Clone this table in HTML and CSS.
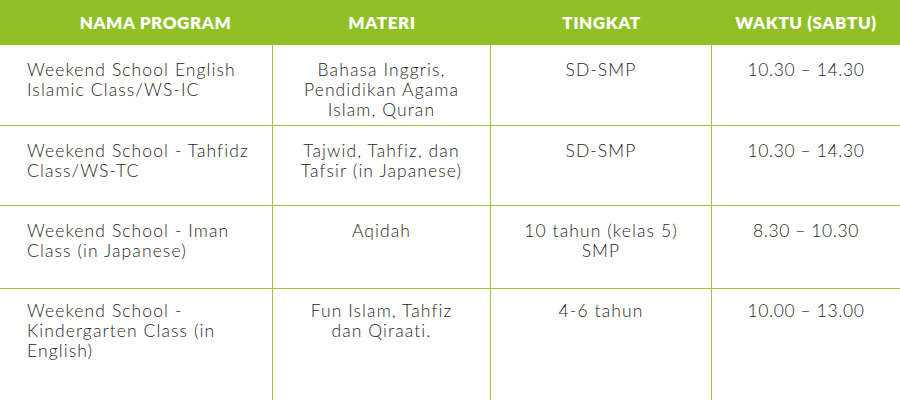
FILE: index.html
```html
<!DOCTYPE html>
<html lang="id">
<head>
<meta charset="utf-8">
<title>Jadwal Program</title>
<link rel="stylesheet" href="styles.css">
</head>
<body>
<table class="schedule">
  <colgroup>
    <col class="c1"><col class="c2"><col class="c3"><col class="c4">
  </colgroup>
  <thead>
    <tr class="head">
      <th class="h-first">NAMA PROGRAM</th>
      <th>MATERI</th>
      <th>TINGKAT</th>
      <th>WAKTU (SABTU)</th>
    </tr>
  </thead>
  <tbody>
    <tr class="r1">
      <td class="name">Weekend School English Islamic Class/WS-IC</td>
      <td class="mat">Bahasa Inggris, Pendidikan Agama Islam, Quran</td>
      <td>SD-SMP</td>
      <td class="last">10.30 – 14.30</td>
    </tr>
    <tr class="r2">
      <td class="name">Weekend School - Tahfidz Class/WS-TC</td>
      <td class="mat">Tajwid, Tahfiz, dan Tafsir (in Japanese)</td>
      <td>SD-SMP</td>
      <td class="last">10.30 – 14.30</td>
    </tr>
    <tr class="r3">
      <td class="name">Weekend School - Iman Class (in Japanese)</td>
      <td class="mat">Aqidah</td>
      <td class="lvl">10 tahun (kelas 5) SMP</td>
      <td class="last">8.30 – 10.30</td>
    </tr>
    <tr class="r4">
      <td class="name">Weekend School - Kindergarten Class (in English)</td>
      <td class="mat">Fun Islam, Tahfiz dan Qiraati.</td>
      <td>4-6 tahun</td>
      <td class="last">10.00 – 13.00</td>
    </tr>
  </tbody>
</table>
</body>
</html>
```

FILE: styles.css
```css
html, body {
  margin: 0;
  padding: 0;
  background: #ffffff;
}
.schedule {
  width: 900px;
  table-layout: fixed;
  border-collapse: separate;
  border-spacing: 0;
  font-family: "Lato", "Liberation Sans", sans-serif;
}
.c1 { width: 273px; }
.c2 { width: 218px; }
.c3 { width: 221px; }
.c4 { width: 188px; }

.head {
  height: 45px;
  background: #8fc126;
}
.head th {
  color: #ffffff;
  font-weight: 800;
  font-size: 17px;
  letter-spacing: 0.6px;
  text-align: center;
  vertical-align: middle;
  padding: 0;
}
.head .h-first {
  padding-left: 38px;
}

.schedule td {
  color: #262626;
  font-size: 17.5px;
  font-weight: 300;
  line-height: 20px;
  letter-spacing: 1.1px;
  text-align: center;
  vertical-align: top;
  padding: 15px 10px 0;
  border-right: 1px solid #9cc63f;
  border-bottom: 1px solid #9cc63f;
}
.schedule td.name {
  text-align: left;
  padding-left: 27px;
  padding-right: 16px;
}
.schedule td.mat {
  padding-left: 22px;
  padding-right: 22px;
}
.schedule td.lvl {
  padding-left: 25px;
  padding-right: 25px;
}
.schedule td.last {
  border-right: none;
  letter-spacing: 0.6px;
}
.r1 { height: 81px; }
.r2 { height: 80px; }
.r3 { height: 83px; }
.r4 { height: 120px; }
.schedule .r4 td { padding-top: 12px; }
```
